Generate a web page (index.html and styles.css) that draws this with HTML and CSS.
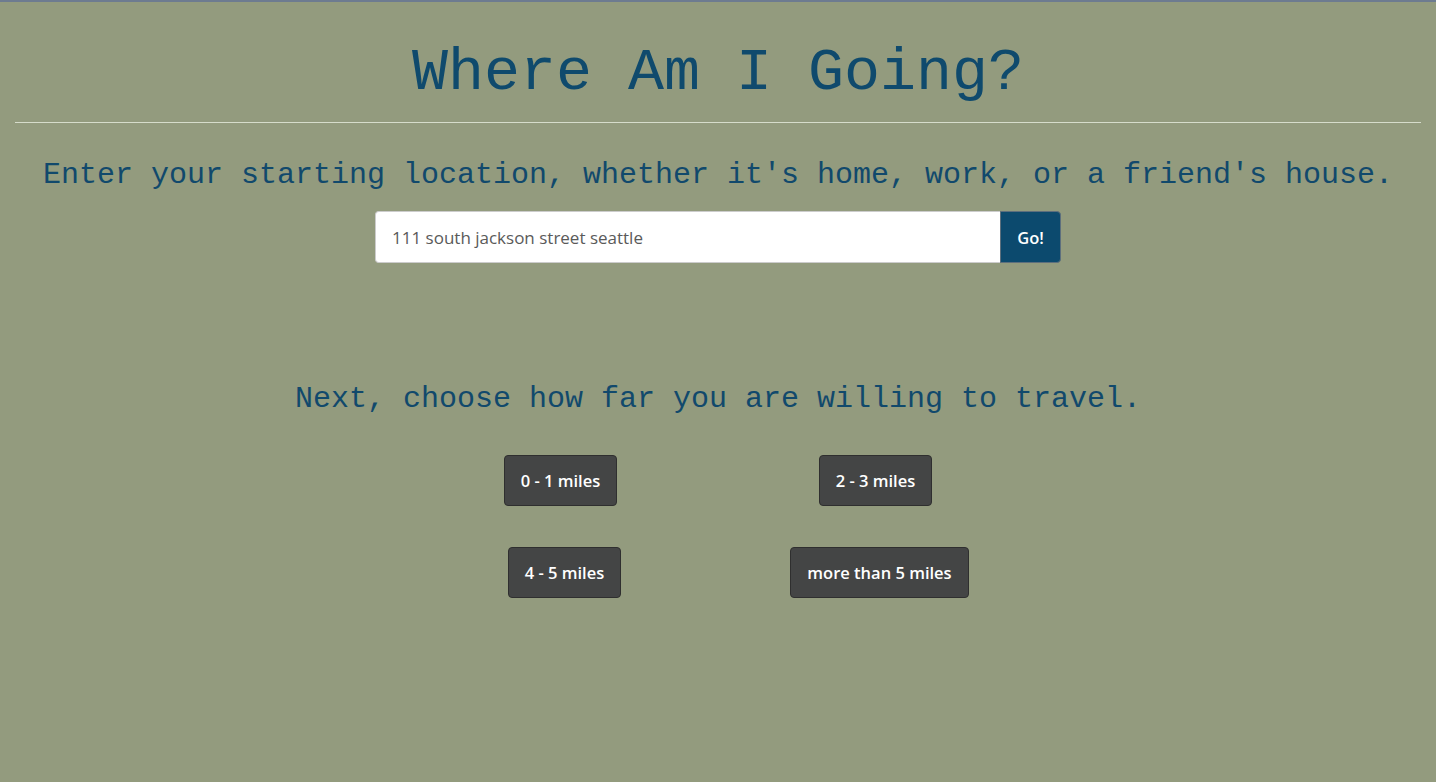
FILE: index.html
```html
<!DOCTYPE html>
<html lang="en">
<head>
<meta charset="utf-8">
<title>Where Am I Going?</title>
<link rel="stylesheet" href="styles.css">
</head>
<body>
<div class="page">
  <header class="header">
    <h1 class="title">Where Am I Going?</h1>
  </header>
  <hr class="divider">
  <section class="start">
    <h2 class="prompt">Enter your starting location, whether it's home, work, or a friend's house.</h2>
    <form class="search" onsubmit="return false;">
      <input class="search-input" type="text" value="111 south jackson street seattle">
      <button class="search-btn" type="submit">Go!</button>
    </form>
  </section>
  <section class="distance">
    <h2 class="prompt">Next, choose how far you are willing to travel.</h2>
    <div class="choices">
      <div class="choice"><button class="mile-btn" type="button">0 - 1 miles</button></div>
      <div class="choice"><button class="mile-btn" type="button">2 - 3 miles</button></div>
      <div class="choice choice-r2"><button class="mile-btn" type="button">4 - 5 miles</button></div>
      <div class="choice choice-r2"><button class="mile-btn" type="button">more than 5 miles</button></div>
    </div>
  </section>
</div>
</body>
</html>
```
FILE: styles.css
```css
* { box-sizing: border-box; }
html, body {
  margin: 0;
  padding: 0;
  height: 100%;
}
body {
  background: #939b7e;
  border-top: 2px solid #6d7b90;
  font-family: "Open Sans", "Liberation Sans", sans-serif;
  overflow: hidden;
}
.page {
  padding: 0 15px;
}
.header {
  padding-top: 38px;
}
.title {
  margin: 0;
  font-family: "Liberation Mono", "Courier New", monospace;
  font-weight: normal;
  font-size: 60px;
  line-height: 66px;
  color: #0f4a6d;
  text-align: center;
}
.divider {
  margin: 16px 0 0;
  border: 0;
  border-top: 1px solid #d6dccb;
  height: 0;
}
.prompt {
  margin: 0;
  font-family: "Liberation Mono", "Courier New", monospace;
  font-weight: normal;
  font-size: 30px;
  line-height: 33px;
  color: #11496c;
  text-align: center;
}
.start {
  padding-top: 36px;
}
.search {
  display: flex;
  justify-content: center;
  margin-top: 19px;
}
.search-input {
  width: 625px;
  height: 52px;
  border: 1px solid #ccc;
  border-right: 0;
  border-radius: 4px 0 0 4px;
  padding: 0 16px;
  font-family: "Open Sans", sans-serif;
  font-size: 17px;
  color: #5a5a5a;
  background: #fff;
  outline: none;
}
.search-btn {
  width: 61px;
  height: 52px;
  border: 1px solid #5d6f7d;
  border-radius: 0 4px 4px 0;
  background: #0c4a6e;
  color: #fff;
  font-family: "Open Sans", sans-serif;
  font-weight: 600;
  font-size: 16.5px;
  padding: 0;
}
.distance {
  padding-top: 120px;
}
.choices {
  display: grid;
  grid-template-columns: 315px 315px;
  justify-content: center;
  row-gap: 41px;
  margin-top: 39px;
  margin-left: 4px;
}
.choice {
  display: flex;
  justify-content: center;
  padding-right: 4px;
}
.choice-r2 {
  padding-right: 0;
  padding-left: 4px;
}
.mile-btn {
  height: 51px;
  padding: 0 16px;
  border: 1px solid #2f2f2f;
  border-radius: 4px;
  background: #444545;
  color: #fff;
  font-family: "Open Sans", sans-serif;
  font-weight: 600;
  font-size: 16.5px;
  line-height: 21px;
}
```
